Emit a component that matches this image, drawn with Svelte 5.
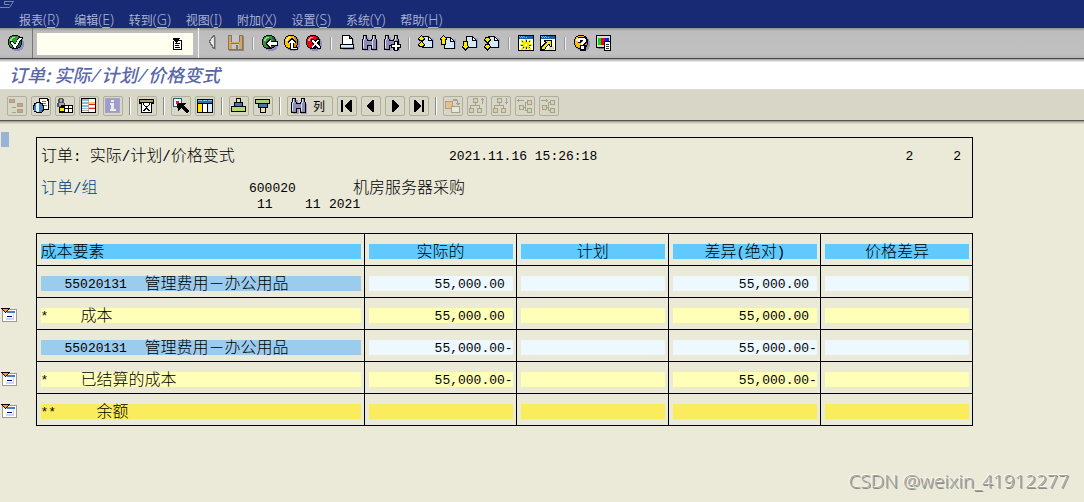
<script>
  const disc = 'h6v1h2v1h1v2h1v6h-1v2h-1v1h-2v1h-6v-1h-2v-1h-1v-2h-1v-6h1v-2h1v-1h2z';
  const face = 'M4 1h6v1h2v2h1v6h-1v2h-2v1h-6v-1h-2v-2h-1v-6h1v-2h2z';
  const shine = 'M4 2h3v1h-2v1h-1v2h-2v-2h1v-1h1z';
  const ball = (color, light, dark) => [
    ['#8f8fbd', 'M6 2' + disc],
    ['#000', 'M4 0' + disc],
    [color, face],
    [dark, 'M10 2h2v2h1v6h-1v2h-2v1h-5v-1h3v-1h2v-2h1v-5h-1z'],
    [light, shine]
  ];
  const page = (x, y) => [
    ['#8fa8d8', `M${x + 1} ${y + 2}h11v10h-11z`],
    ['#000', `M${x} ${y}h7v1h1v1h1v1h1v1h1v8h-11z`],
    ['#d6e8fb', `M${x + 1} ${y + 1}h5v4h4v6h-9z`],
    ['#fff', `M${x + 7} ${y + 2}h1v1h1v1h-2z`]
  ];
  const up = (x, y, h) => [
    ['#000', `M${x + 2} ${y - 1}h1v1h1v1h1v1h1v2h-1v${h}h-5v-${h}h-1v-2h1v-1h1v-1h1z`],
    ['#ffe800', `M${x + 2} ${y}h1v1h1v1h1v1h-1v${h}h-3v-${h}h-1v-1h1v-1h1z`]
  ];
  const down = (x, y, h) => [
    ['#000', `M${x} ${y - 1}h5v${h + 1}h1v2h-1v1h-1v1h-1v1h-1v-1h-1v-1h-1v-1h-1v-2h1z`],
    ['#ffe800', `M${x + 1} ${y}h3v${h}h1v1h-1v1h-1v1h-1v-1h-1v-1h-1v-1h1z`]
  ];
  const glasses = [
    ['#9a9ac6', 'M3 2h4v4h3v-4h4v4h2v10h-6v-5h-2v5h-6v-9z'],
    ['#000', 'M1 0h4v4h1v1h3v-1h1v-4h4v4h1v11h-6v-4h-3v4h-6v-11h1z'],
    ['#8c8cb8', 'M2 1h2v3h1v2h5v-2h1v-3h2v3h1v10h-4v-4h-5v4h-4v-10h1z'],
    ['#dcdcf4', 'M2 1h1v4h-1zM1 5h1v8h-1zM11 1h1v4h-1zM10 5h1v8h-1z']
  ];
  const windowFrame = [
    ['#000', 'M0 0h16v16h-16z'],
    ['#fffff0', 'M1 4h14v11h-14z'],
    ['#1c62a8', 'M1 1h14v3h-14z'],
    ['#7cb4e4', 'M1 1h1v1h-1zM3 1h1v1h-1zM5 1h1v1h-1zM2 2h1v1h-1zM4 2h1v1h-1zM6 2h1v1h-1zM8 2h1v1h-1z']
  ];
  const box = (x, y, c) => [['#a3a28f', `M${x} ${y}h5v5h-5z`], [c, `M${x + 1} ${y + 1}h3v3h-3z`]];
  const tan = '#e8c9a0';
  const sage = '#cfd6a8';

  const icons = {
    check: [
      ...ball('#2c9c34', '#a8e078', '#0c6c50'),
      ['#000', 'M2 6h3v1h1v1h2v-2h1v-2h1v-1h1v-1h4v2h-1v1h-1v1h-1v2h-1v2h-1v1h-1v2h-1v1h-2v-1h-1v-1h-1v-2h-1v-1h-1z'],
      ['#fff', 'M3 7h2v1h1v1h2v-2h1v-2h1v-1h1v-1h3v1h-1v1h-1v1h-1v2h-1v2h-1v1h-1v2h-2v-1h-1v-2h-1v-1h-1z']
    ],
    back: [
      ...ball('#2f9434', '#a5d58a', '#12643c'),
      ['#000', 'M4 7h1v-1h1v-1h1v-1h2v2h7v5h-7v2h-2v-1h-1v-1h-1v-1h-1z'],
      ['#fffff0', 'M5 8h1v-1h1v-1h1v-1h1v2h6v3h-6v2h-1v-1h-1v-1h-1v-1h-1z']
    ],
    up: [
      ...ball('#f8c400', '#fff48c', '#d88400'),
      ['#000', 'M7 3h2v1h1v1h1v1h1v2h-2v4h4v3h-8v-7h-2v-2h1v-1h1v-1h1z'],
      ['#fffff0', 'M7 4h1v1h1v1h1v1h1v1h-2v5h4v1h-6v-6h-2v-1h1v-1h1v-1h1z']
    ],
    cancel: [
      ...ball('#e60814', '#ff9c9c', '#a80010'),
      ['#000', 'M5 4h3v1h2v-1h4v3h-1v2h1v2h1v3h-4v-1h-2v1h-3v-3h1v-2h-1v-2h-1z'],
      ['#fff', 'M6 5h2v1h1v1h1v-1h1v-1h2v1h-1v1h-1v2h1v1h1v1h1v2h-2v-1h-1v-1h-1v-1h-1v1h-1v1h-1v1h-1v-2h1v-1h1v-2h-1v-1h-1z']
    ],
    prev: [['#999', 'M8 1h1v14h1v-12z'], ['#6b6b6b', 'M7 0h2v14h-2v-1h-1v-2h-1v-1h-1v-2h-1v-3h1v-1h1v-2h1v-1h1z'], ['#e5e5e5', 'M7 2h1v10h-1v-2h-1v-1h-1v-2h-1v-1h1v-2h1v-1h1z']],
    save: [['#888', 'M1 1h15v15h-15z'], ['#8a7650', 'M0 0h15v15h-15z'], ['#cfa56a', 'M1 1h13v13h-13z'], ['#c6c6c6', 'M4 0h7v7h-7zM4 9h7v5h-7z'], ['#777', 'M3 1h1v6h-1zM11 1h1v6h-1zM3 8h8v1h-8zM8 10h2v4h-2z']],
    print: [['#9494c0', 'M3 12h12v3h-12zM13 4h1v9h-1z'], ['#000', 'M2 0h8v1h1v1h1v1h1v6h1v5h-14v-5h2z'], ['#fff', 'M3 1h6v3h3v5h-9z'], ['#dcecff', 'M1 10h12v3h-12z'], ['#8ea0bc', 'M10 2h1v1h-1zM1 12h12v1h-12z']],
    find: glasses,
    findNext: [...glasses, ['#000', 'M10 6h4v3h3v4h-3v3h-4v-3h-3v-4h3z'], ['#fff', 'M11 7h2v3h3v2h-3v3h-2v-3h-3v-2h3z']],
    first: [...page(4, 1), ...up(1, 1, 1), ...up(1, 7, 1)],
    pageUp: [...page(4, 2), ...up(1, 1, 5)],
    pageDown: [...page(4, 1), ...down(1, 7, 4)],
    last: [...page(4, 1), ...down(1, 3, 1), ...down(1, 10, 1)],
    session: [...windowFrame, ['#f2e400', 'M3 5h2v1h1v1h1v-3h2v3h1v-1h1v-1h2v2h-1v1h-1v1h3v2h-3v1h1v1h1v2h-2v-1h-1v-1h-1v2h-2v-2h-1v1h-1v1h-2v-2h1v-1h1v-1h-3v-2h3v-1h-1v-1h-1z'], ['#222', 'M4 6h1v1h-1zM8 5h1v2h-1zM11 6h1v1h-1zM3 10h2v1h-2zM11 10h2v1h-2zM8 12h1v2h-1zM5 13h1v-1h-1zM11 13h1v-1h-1z'], ['#fff', 'M7 9h2v2h-2z']],
    shortcut: [...windowFrame, ['#ddd9c5', 'M9 11h5v4h-5z'], ['#000', 'M4 5h8v7h-2v-1h-1v-1h-1v1h-1v1h-1v2h-1v1h-4v-4h1v-1h1v-1h1v-1h1v-1h-1z'], ['#ffe800', 'M5 6h6v5h-1v-2h-2v1h-1v1h-1v1h-1v2h-3v-2h1v-1h1v-1h1v-1h1v-1h1v-1h-1z']],
    help: [...ball('#fac018', '#fff29a', '#e48c10'), ['#000', 'M4 2h8v1h1v5h-1v1h-1v1h1v6h-6v-6h1v-2h1v-1h1v-1h-1v1h-1v1h-3v-4h1z'], ['#fff', 'M5 3h6v1h1v3h-1v1h-1v1h-1v1h-2v-2h1v-1h1v-2h-3v2h-2v-3h1zM7 11h3v3h-3z']],
    layout: [['#000', 'M0 0h15v13h-15z'], ['#ddd', 'M1 1h13v11h-13z'], ['#00d818', 'M2 3h3v7h-3z'], ['#f00018', 'M5 3h4v7h-4z'], ['#1020e8', 'M9 3h4v7h-4z'], ['#777', 'M2 13h7v1h-7z'], ['#000', 'M8 6h7v10h-7z'], ['#fff', 'M9 7h5v8h-5z'], ['#333', 'M10 9h3v1h-3zM10 11h3v1h-3zM10 13h3v1h-3z']],
    tree: [['#a3a28f', 'M0 1h6v4h-6zM2 5h1v10h4v-1h-4v-4h4v-1h-4v-4zM8 5h6v4h-6zM8 11h6v4h-6z'], ['#d4a07c', 'M1 2h4v2h-4zM9 6h4v2h-4zM9 12h4v2h-4z']],
    detail: [['#000', 'M6 0h9v1h1v11h-10z'], ['#fffff0', 'M7 1h7v2h1v8h-8z'], ['#777', 'M9 3h4v1h-4zM9 5h4v1h-4zM10 7h4v1h-4z'], ['#000', 'M3 4h5v1h2v2h1v6h-1v1h-1v1h-6v-1h-2v-2h-1v-5h1v-2h2z'], ['#4480c8', 'M3 5h4v1h2v2h1v4h-1v2h-6v-1h-2v-5h1v-2h1z'], ['#e4f4ff', 'M4 5h2v9h-2v-1h-1v-7h1z']],
    overview: [['#555', 'M2 0h4v1h1v4h1v4h-8v-4h1v-4h1z'], ['#aaa8b8', 'M2 5h5v3h-5zM3 1h2v3h-2z'], ['#000', 'M4 7h12v8h-14v-6h2z'], ['#fffff0', 'M8 8h3v2h-3zM12 8h3v2h-3zM8 11h3v3h-3zM12 11h3v3h-3z'], ['#ffe800', 'M3 10h4v3h-4z']],
    rows: [['#000', 'M0 0h15v15h-15z'], ['#fffff0', 'M1 1h13v13h-13z'], ['#8eb8d8', 'M1 1h6v2h-6zM1 4h6v2h-6zM1 7h6v2h-6zM1 10h6v1h-6z'], ['#ffd050', 'M8 4h6v2h-6zM8 9h6v1h-6z'], ['#e42020', 'M7 6h7v1h-7zM7 10h7v1h-7z'], ['#aaa', 'M1 12h6v1h-6zM7 1h1v13h-1z']],
    info: [['#a5a5bf', 'M0 0h15v15h-15z'], ['#9c9cd0', 'M1 1h13v13h-13z'], ['#eeeede', 'M6 2h3v2h-3zM5 5h4v6h2v2h-6v-2h1v-4h-1z']],
    filter: [['#000', 'M0 1h15v5h-2v9h-11v-9h-2z'], ['#b39a78', 'M1 2h13v2h-13z'], ['#fff', 'M3 5h9v9h-9z'], ['#000', 'M4 5h1v2h1v1h3v-1h1v-2h1v2h-1v1h-1v1h-1v1h1v1h1v1h1v1h-2v-1h-1v-1h-1v1h-1v1h-2v-1h1v-1h1v-1h1v-1h-1v-1h-1v-1h-1z']],
    pick: [['#357', 'M0 0h9v9h-9z'], ['#f7f7ff', 'M1 1h7v7h-7z'], ['#e81820', 'M3 3h3v3h-3z'], ['#000', 'M5 5h8v1h-1v1h-1v1h1v1h1v1h1v1h1v1h1v2h-1v1h-2v-1h-1v-1h-1v-1h-1v-1h-1v-1h-1v1h-1v1h-1v1h-1v-3h-1v-3h-1z']],
    columns: [['#000', 'M0 1h16v14h-16z'], ['#2b70b4', 'M1 2h14v3h-14z'], ['#8ec4f0', 'M1 2h4v1h-4zM6 2h4v1h-4zM11 2h4v1h-4z'], ['#ffe500', 'M1 6h4v8h-4z'], ['#fff', 'M6 6h4v8h-4z'], ['#d8ecff', 'M11 6h4v8h-4z']],
    asc: [['#000', 'M5 0h5v4h2v4h3v6h-15v-6h3v-4h2z'], ['#eee0a0', 'M6 1h3v3h-3z'], ['#3d78b8', 'M4 5h7v3h-7z'], ['#b8d870', 'M1 9h13v4h-13z']],
    desc: [['#000', 'M0 1h15v5h-2v4h-2v5h-6v-5h-2v-4h-3z'], ['#a8d070', 'M1 2h13v3h-13z'], ['#3d78b8', 'M4 6h8v3h-8z'], ['#eee0a0', 'M6 10h4v4h-4z']],
    start: [['#000', 'M2 2h2v12h-2zM11 2h2v12h-2v-1h-1v-1h-1v-1h-1v-1h-1v-1h-1v-2h1v-1h1v-1h1v-1h1v-1h1z']],
    left: [['#000', 'M9 2h2v12h-2v-1h-1v-1h-1v-1h-1v-1h-1v-1h-1v-2h1v-1h1v-1h1v-1h1v-1h1z']],
    right: [['#000', 'M5 2h2v1h1v1h1v1h1v1h1v1h1v2h-1v1h-1v1h-1v1h-1v1h-1v1h-2z']],
    end: [['#000', 'M3 2h2v1h1v1h1v1h1v1h1v1h1v2h-1v1h-1v1h-1v1h-1v1h-1v1h-2zM11 2h2v12h-2z']],
    drill: [['#a3a28f', 'M0 3h8v8h-8zM6 8h9v7h-9zM8 1h4v1h1v3h2v1h-1v1h-2v-1h-1v-1h1v-2h-4z'], ['#ebbd87', 'M1 4h6v4h-1v2h-5z'], ['#e8e8d8', 'M7 9h7v5h-7z']],
    levelUp: [...box(4, 0, tan), ...box(0, 10, sage), ...box(8, 10, sage), ['#a3a28f', 'M6 5h1v2h4v3h-1v-2h-8v2h-1v-3h5zM13 0h1v1h1v1h-1v4h-1v-4h-1v-1h1z']],
    levelDown: [...box(4, 0, sage), ...box(0, 10, tan), ...box(8, 10, tan), ['#a3a28f', 'M6 5h1v2h4v3h-1v-2h-8v2h-1v-3h5zM13 0h1v4h1v1h-1v1h-1v-1h-1v-1h1z']],
    nodeLeft: [...box(2, 7, sage), ...box(10, 2, tan), ...box(10, 10, sage), ['#a3a28f', 'M7 9h1v-5h2v1h-1v7h1v1h-2v-3h-1zM0 2h1v-1h1v1h5v1h-5v1h-1v-1h-1z']],
    nodeRight: [...box(1, 7, tan), ...box(9, 2, sage), ...box(9, 10, sage), ['#a3a28f', 'M6 9h1v-5h2v1h-1v7h1v1h-2v-3h-1zM0 2h5v-1h1v1h1v1h-1v1h-1v-1h-5z']],
    history: [['#fff', 'M1 3h8v8h-8z'], ['#000', 'M0 0h7v1h-1v1h3v10h-9v-9h1v8h7v-8h-3v1h-1v1h-1v-1h-1v-1h-1v-1h-1zM2 5h5v1h-5zM2 7h4v1h-4zM2 9h5v1h-5z']],
    collapse: [['#999', 'M1 1h15v13h-15z'], ['#fff', 'M2 2h13v11h-13z'], ['#c8d8ff', 'M5 3h8v9h-8z'], ['#4a7cc0', 'M6 3h8v2h-8z'], ['#fff', 'M5 5h7v5h-7z'], ['#0000a0', 'M6 8h5v1h-5z'], ['#000', 'M0 0h9v1h-1v1h-1v1h-1v1h-1v1h-1v-1h-1v-1h-1v-1h-1v-1h-1z'], ['#ffa000', 'M2 1h5v1h-1v1h-1v1h-1v-1h-1v-1h-1z']]
  };

  const menus = [
    ['报表', 'R'], ['编辑', 'E'], ['转到', 'G'], ['视图', 'I'],
    ['附加', 'X'], ['设置', 'S'], ['系统', 'Y'], ['帮助', 'H']
  ];
  const systemTools = [
    [['prev', '上一个'], ['save', '保存']],
    [['back', '返回'], ['up', '退出'], ['cancel', '取消']],
    [['print', '打印'], ['find', '查找'], ['findNext', '查找下一个']],
    [['first', '首页'], ['pageUp', '上一页'], ['pageDown', '下一页'], ['last', '末页']],
    [['session', '新建会话'], ['shortcut', '快捷方式']],
    [['help', '帮助'], ['layout', '布局']]
  ];
  const reportTools = [
    [['tree', '层次'], ['detail', '明细'], ['overview', '概览'], ['rows', '行'], ['info', '信息']],
    [['filter', '过滤']],
    [['pick', '选择'], ['columns', '列设置']],
    [['asc', '升序'], ['desc', '降序']],
    [['find', '查找列', '列'], ['start', '第一列'], ['left', '左列'], ['right', '右列'], ['end', '最后一列']],
    [['drill', '钻取'], ['levelUp', '上层'], ['levelDown', '下层'], ['nodeLeft', '前一节点'], ['nodeRight', '后一节点']]
  ];
  const headings = ['成本要素', '实际的', '计划', '差异(绝对)', '价格差异'];
  const rows = [
    { kind: 'item', code: '55020131', label: '管理费用－办公用品', value: '55,000.00 ' },
    { kind: 'sum', code: '*', label: '成本', value: '55,000.00 ' },
    { kind: 'item', code: '55020131', label: '管理费用－办公用品', value: '55,000.00-' },
    { kind: 'sum', code: '*', label: '已结算的成本', value: '55,000.00-' },
    { kind: 'total', code: '**', label: '余额', value: '' }
  ];
  const runs = (text) => text.match(/[\x20-\x7e]+|[^\x20-\x7e]+/g) ?? [];
  const titleRuns = (text) => text.split(/(\/)/);
</script>

{#snippet icon(name)}
  <svg class="icon" viewBox="0 0 16 16" aria-hidden="true">
    {#each icons[name] as [fill, d]}<path {fill} {d} />{/each}
  </svg>
{/snippet}

{#snippet mixed(text)}{#each runs(text) as run}{#if run.charCodeAt(0) < 127}<span class="mono run">{run}</span>{:else}{run}{/if}{/each}{/snippet}

<div class="screen">
  <header class="menubar">
    <svg class="grip" viewBox="0 0 16 10" aria-hidden="true">
      <path d="M4 1.5h9.500l-4 6h-9.500M4.500 1.500v3h5" />
    </svg>
    <nav>
      {#each menus as [label, key]}
        <button>{label}<span class="key">(<u>{key}</u>)</span></button>
      {/each}
    </nav>
  </header>

  <div class="system">
    <div class="enter"><button aria-label="确认">{@render icon('check')}</button></div>
    <div class="command">
      <input type="text" aria-label="命令" />
      <button aria-label="历史">{@render icon('history')}</button>
    </div>
    <div class="tools">
      {#each systemTools as group}
        <div class="group">
          {#each group as [name, label]}
            <button aria-label={label}>{@render icon(name)}</button>
          {/each}
        </div>
      {/each}
    </div>
  </div>

  <h1>{#each titleRuns('订单: 实际/计划/价格变式') as part}{#if part === '/'}<span class="mono">/</span>{:else}{part}{/if}{/each}</h1>

  <div class="report-tools">
    {#each reportTools as group}
      <div class="group">
        {#each group as [name, label, text]}
          <button aria-label={label} class:wide={text}>{@render icon(name)}{#if text}<span>{text}</span>{/if}</button>
        {/each}
      </div>
    {/each}
  </div>

  <main>
    <span class="cursor"></span>
    <section class="summary">
      <div class="line first">
        <span>{@render mixed('订单: 实际/计划/价格变式')}</span>
        <span class="mono">2021.11.16 15:26:18</span>
        <span class="pages mono"><span>2</span><span>2</span></span>
      </div>
      <div class="line order">
        <span class="link">{@render mixed('订单/组')}</span>
        <span class="mono">600020</span>
        <span>机房服务器采购</span>
      </div>
      <div class="line period mono"><span>11</span><span>11</span><span>2021</span></div>
    </section>

    <table>
      <colgroup><col class="gutter-col" /><col class="cost-col" /><col /><col /><col /><col /></colgroup>
      <thead>
        <tr>
          <td class="gutter"></td>
          {#each headings as heading}
            <th scope="col"><div class="band">{@render mixed(heading)}</div></th>
          {/each}
        </tr>
      </thead>
      <tbody>
        {#each rows as row}
          <tr class={row.kind}>
            <td class="gutter">
              {#if row.kind !== 'item'}<button aria-label="折叠">{@render icon('collapse')}</button>{/if}
            </td>
            <td class="cost"><div class="band"><span class="code mono">{row.code}</span><span>{row.label}</span></div></td>
            {#each [row.value, '', row.value, ''] as value}
              <td><div class="band amount mono">{value}</div></td>
            {/each}
          </tr>
        {/each}
      </tbody>
    </table>
  </main>
  <div class="watermark">CSDN @weixin_41912277</div>
</div>

<style>
  :global(body) { background: #ebead9; }
  .screen {
    position: relative;
    min-height: 100vh;
    background: #ebead9;
    color: #000;
    font-family: "Noto Sans CJK SC", sans-serif;
    font-size: 16px;
    font-weight: 300;
    line-height: 16px;
  }
  button { display: block; margin: 0; padding: 0; border: 0; background: none; color: inherit; font: inherit; }
  .icon { display: block; flex: none; width: 16px; height: 16px; overflow: visible; shape-rendering: crispEdges; }
  .mono { font-family: "Liberation Mono", monospace; font-size: 13px; white-space: pre; }
  .run { font-size: 14px; line-height: 1px; }

  .menubar { height: 28px; background: #182a74; color: #a9b2d2; }
  .grip { display: block; width: 16px; height: 10px; fill: none; stroke: #7583b5; }
  nav { display: flex; gap: 15px; padding: 2px 19px 0; font-size: 12px; font-weight: 400; }
  nav button { display: flex; }
  .key { font-family: "Noto Sans", sans-serif; font-size: 14px; font-weight: 300; line-height: 16px; }
  u { text-underline-offset: 2px; }

  .system {
    display: flex;
    height: 30px;
    background: linear-gradient(#8f8f8f, #bdbdbd 3px, #c0c0c0 26px, #b4b4b4);
    border-bottom: 1px solid #484848;
    box-shadow: 0 1px #aaa, 0 2px #c8c8c8, 0 3px #e6e6e6;
    position: relative;
  }
  .enter { padding: 7px 8px; border-right: 1px solid #777; }
  .command { display: flex; position: relative; padding: 5px 5px 3px 4px; border-right: 1px solid #f4f4f4; }
  .command input { width: 156px; height: 22px; box-sizing: border-box; border: 0; padding: 0 24px 0 4px; background: #fffff0; font: inherit; }
  .command button { position: absolute; right: 9px; top: 10px; }
  .tools { display: flex; padding: 7px; }
  .tools .group { display: flex; gap: 6px; }
  .tools .group + .group { margin-left: 8px; padding-left: 10px; position: relative; }
  .tools .group + .group::before {
    content: ""; position: absolute; left: 0; top: 2px;
    width: 1px; height: 13px; background: #f0f0f0; border-left: 1px solid #999;
  }

  h1 {
    margin: 0; padding: 7px 9px; height: 16px;
    background: #fff; border-bottom: 1px solid #dcdcdc;
    color: #5967a7; font-size: 18px; line-height: 16px; font-style: italic; font-weight: 500;
  }
  h1 .mono { font-size: 18px; }

  .report-tools {
    display: flex;
    height: 20px;
    padding: 6px 7px 4px;
    background: #d8d6c6;
    border-bottom: 1px solid #55544c;
    box-shadow: 0 1px #a3a294, 0 2px #c4c3b3, 0 3px #dcdbcb;
  }
  .report-tools .group { display: flex; gap: 4px; }
  .report-tools .group + .group { position: relative; padding-left: 14px; }
  .report-tools .group + .group::before {
    content: ""; position: absolute; left: 6px; top: 1px;
    width: 1px; height: 18px; background: #fff; border-left: 1px solid #8b8a7c;
  }
  .report-tools button {
    display: flex; width: 20px; height: 20px; padding: 1px; box-sizing: border-box;
    border: 1px solid #b0af9d; border-radius: 2px;
  }
  .report-tools .wide { width: 46px; padding-left: 3px; gap: 6px; font-size: 12px; font-weight: 400; }

  main { display: flow-root; position: relative; padding: 16px 12px 0 0; }
  .cursor { position: absolute; left: 1px; top: 11px; width: 8px; height: 15px; background: #9ab3d5; }
  .summary {
    max-width: 937px; margin-left: 36px; padding: 10px 11px 5px 4px; box-sizing: border-box;
    border: 1px solid #000;
  }
  .line { display: grid; grid-template-rows: 16px; align-items: start; white-space: nowrap; line-height: 13px; }
  .line .mono:not(.run), .period { line-height: 17px; }
  .first { grid-template-columns: 408px 1fr auto; margin-bottom: 16px; }
  .pages { display: flex; gap: 40px; }
  .order { grid-template-columns: 208px 104px 1fr; }
  .period { grid-template-columns: 48px 24px 1fr; padding-left: 216px; }
  .link { color: #00418c; }

  table { width: 100%; max-width: 973px; margin-top: 15px; table-layout: fixed; border-collapse: collapse; }
  .gutter-col { width: 36px; }
  .cost-col { width: 328px; }
  th, td { padding: 10px 3px 6px 4px; border: 1px solid #000; font-weight: 300; }
  .gutter { padding: 4px 0 0 1px; border-width: 0 1px 0 0; }
  .band { height: 15px; line-height: 13px; background: #60caff; white-space: pre; }
  th:nth-child(2) { text-align: left; }
  .item .band { background: #edf8ff; }
  .item .cost .band { background: #9bccee; }
  .sum .band { background: #ffffb8; }
  .total .band { background: #faec5c; }
  .amount { text-align: right; }
  .amount, .code { line-height: 17px; }
  .cost .band { display: flex; }
  .code { width: 40px; }
  .item .code { width: 80px; padding-left: 24px; }
  .total .code { width: 56px; }

  .watermark {
    position: absolute; right: 15px; bottom: 9px;
    color: #a3a39b; font-family: "Noto Sans", sans-serif; font-size: 19px; font-weight: 300; line-height: 24px;
    text-shadow: -1px -1px #f8f8f0, 1px 1px #8b8b85;
  }
</style>
